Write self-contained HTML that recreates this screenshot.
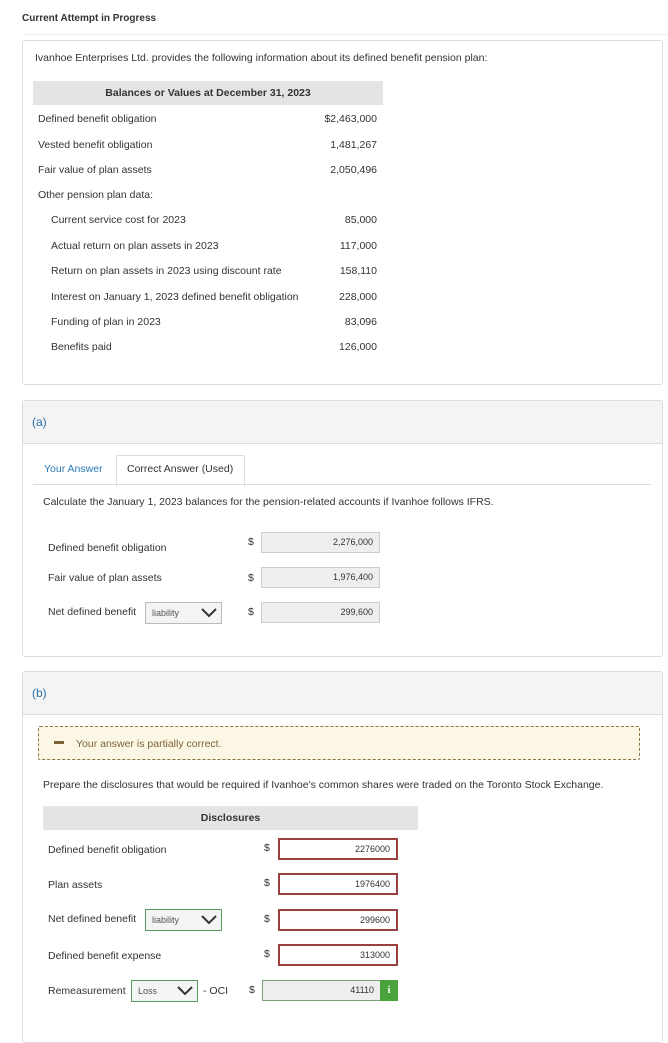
<!DOCTYPE html><html><head><style>
body{margin:0;width:668px;height:1028px;background:#fff;font-family:"Liberation Sans",sans-serif;font-size:10.5px;color:#333;position:relative;overflow:hidden}
.a{position:absolute;white-space:nowrap;line-height:12px}
.box{position:absolute;border:1px solid #ddd;border-radius:3px}
.r{text-align:right}
.inp{position:absolute;height:19px;line-height:19px;text-align:right;padding-right:6px;box-sizing:border-box;font-size:9px}
.g{background:#eee;border:1px solid #ccc}
.red{border:2px solid #9b4040;background:#fff}
.dd{position:absolute;height:22px;box-sizing:border-box;border:1px solid #bbb;background:#f4f4f4;font-size:9px;color:#555;line-height:20px;padding-left:6px}
.dd svg{position:absolute;right:4px;top:5px}
.gr{border-color:#5a9a5a}
</style></head><body>
<div class="a" style="left:22px;top:13px;font-weight:bold;font-size:10px">Current Attempt in Progress</div>
<div style="position:absolute;left:22px;top:34px;width:646px;height:1px;background:#eee"></div>
<div class="box" style="left:22px;top:40px;width:639px;height:343px"></div>
<div class="a" style="left:35px;top:52px">Ivanhoe Enterprises Ltd. provides the following information about its defined benefit pension plan:</div>
<div style="position:absolute;left:33px;top:81px;width:350px;height:24px;background:#e4e4e4"></div>
<div class="a" style="left:33px;top:87px;width:350px;text-align:center;font-weight:bold">Balances or Values at December 31, 2023</div>
<div class="a" style="left:38px;top:113px">Defined benefit obligation</div><div class="a r" style="left:277px;width:100px;top:113px">$2,463,000</div>
<div class="a" style="left:38px;top:139px">Vested benefit obligation</div><div class="a r" style="left:277px;width:100px;top:139px">1,481,267</div>
<div class="a" style="left:38px;top:164px">Fair value of plan assets</div><div class="a r" style="left:277px;width:100px;top:164px">2,050,496</div>
<div class="a" style="left:38px;top:189px">Other pension plan data:</div>
<div class="a" style="left:51px;top:214px">Current service cost for 2023</div><div class="a r" style="left:277px;width:100px;top:214px">85,000</div>
<div class="a" style="left:51px;top:240px">Actual return on plan assets in 2023</div><div class="a r" style="left:277px;width:100px;top:240px">117,000</div>
<div class="a" style="left:51px;top:265px">Return on plan assets in 2023 using discount rate</div><div class="a r" style="left:277px;width:100px;top:265px">158,110</div>
<div class="a" style="left:51px;top:291px">Interest on January 1, 2023 defined benefit obligation</div><div class="a r" style="left:277px;width:100px;top:291px">228,000</div>
<div class="a" style="left:51px;top:316px">Funding of plan in 2023</div><div class="a r" style="left:277px;width:100px;top:316px">83,096</div>
<div class="a" style="left:51px;top:341px">Benefits paid</div><div class="a r" style="left:277px;width:100px;top:341px">126,000</div>

<div class="box" style="left:22px;top:400px;width:639px;height:255px"></div>
<div style="position:absolute;left:23px;top:401px;width:639px;height:42px;background:#f4f4f4;border-bottom:1px solid #ddd"></div>
<div class="a" style="left:32px;top:416px;color:#2a6ea8;font-size:12px">(a)</div>
<div class="a" style="left:44px;top:463px;color:#2a7ab8">Your Answer</div>
<div style="position:absolute;left:116px;top:455px;width:127px;height:30px;border:1px solid #ddd;border-bottom:none;background:#fff;border-radius:2px 2px 0 0"></div>
<div class="a" style="left:127px;top:463px">Correct Answer (Used)</div>
<div style="position:absolute;left:33px;top:484px;width:618px;height:1px;background:#ddd"></div>
<div class="a" style="left:43px;top:496px">Calculate the January 1, 2023 balances for the pension-related accounts if Ivanhoe follows IFRS.</div>
<div class="a" style="left:48px;top:542px">Defined benefit obligation</div>
<div class="a" style="left:48px;top:572px">Fair value of plan assets</div>
<div class="a" style="left:48px;top:606px">Net defined benefit</div>
<div class="dd" style="left:145px;top:602px;width:77px">liability<svg width="16" height="10"><path d="M1 1l7 7 7-7" fill="none" stroke="#333" stroke-width="2"/></svg></div>
<div class="a" style="left:248px;top:536px">$</div><div class="a" style="left:248px;top:572px">$</div><div class="a" style="left:248px;top:606px">$</div>
<div class="inp g" style="left:261px;top:532px;width:119px;height:21px;line-height:19px">2,276,000</div>
<div class="inp g" style="left:261px;top:567px;width:119px;height:21px;line-height:19px">1,976,400</div>
<div class="inp g" style="left:261px;top:602px;width:119px;height:21px;line-height:19px">299,600</div>

<div class="box" style="left:22px;top:671px;width:639px;height:370px"></div>
<div style="position:absolute;left:23px;top:672px;width:639px;height:42px;background:#f4f4f4;border-bottom:1px solid #ddd"></div>
<div class="a" style="left:32px;top:687px;color:#2a6ea8;font-size:12px">(b)</div>
<div style="position:absolute;left:38px;top:726px;width:602px;height:34px;box-sizing:border-box;border:1px dashed #8a7448;background:#fcf6e4;border-radius:2px"></div>
<div style="position:absolute;left:54px;top:741px;width:10px;height:3px;background:#7a6438"></div>
<div class="a" style="left:76px;top:738px;color:#7a6438">Your answer is partially correct.</div>
<div class="a" style="left:43px;top:779px">Prepare the disclosures that would be required if Ivanhoe's common shares were traded on the Toronto Stock Exchange.</div>
<div style="position:absolute;left:43px;top:806px;width:375px;height:24px;background:#e4e4e4"></div>
<div class="a" style="left:43px;top:812px;width:375px;text-align:center;font-weight:bold">Disclosures</div>
<div class="a" style="left:48px;top:844px">Defined benefit obligation</div>
<div class="a" style="left:48px;top:879px">Plan assets</div>
<div class="a" style="left:48px;top:913px">Net defined benefit</div>
<div class="a" style="left:48px;top:950px">Defined benefit expense</div>
<div class="a" style="left:48px;top:985px">Remeasurement</div>
<div class="dd gr" style="left:145px;top:909px;width:77px">liability<svg width="16" height="10"><path d="M1 1l7 7 7-7" fill="none" stroke="#333" stroke-width="2"/></svg></div>
<div class="dd gr" style="left:131px;top:980px;width:67px">Loss<svg width="16" height="10"><path d="M1 1l7 7 7-7" fill="none" stroke="#333" stroke-width="2"/></svg></div>
<div class="a" style="left:203px;top:985px">- OCI</div>
<div class="a" style="left:264px;top:842px">$</div><div class="a" style="left:264px;top:877px">$</div><div class="a" style="left:264px;top:913px">$</div><div class="a" style="left:264px;top:948px">$</div><div class="a" style="left:249px;top:984px">$</div>
<div class="inp red" style="left:278px;top:838px;width:120px;height:22px">2276000</div>
<div class="inp red" style="left:278px;top:873px;width:120px;height:22px">1976400</div>
<div class="inp red" style="left:278px;top:909px;width:120px;height:22px">299600</div>
<div class="inp red" style="left:278px;top:944px;width:120px;height:22px">313000</div>
<div class="inp g" style="left:262px;top:980px;width:119px;height:21px;border-color:#7aa07a">41110</div>
<div style="position:absolute;left:380px;top:980px;width:18px;height:21px;background:#4aa33a;color:#fff;font-weight:bold;text-align:center;line-height:21px;font-size:10px;font-family:'Liberation Serif',serif">i</div>
</body></html>
